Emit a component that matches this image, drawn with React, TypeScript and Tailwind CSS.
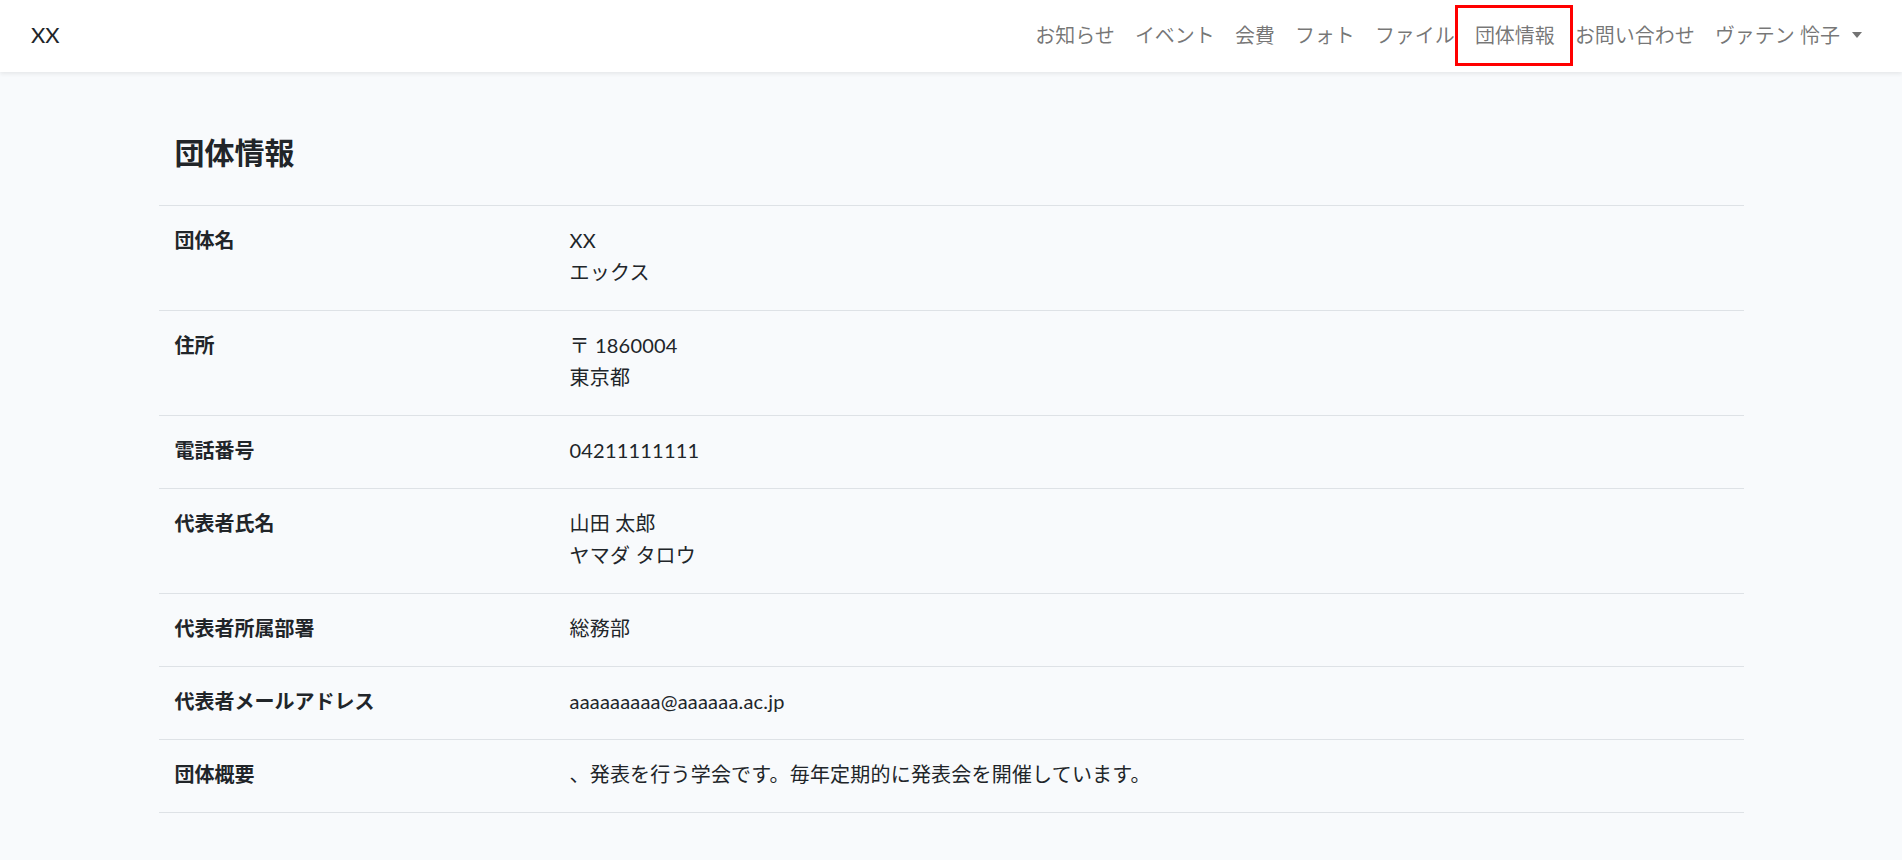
import React from "react";

type Row = { label: string; lines: string[] };

const NAV_ITEMS = ["お知らせ", "イベント", "会費", "フォト", "ファイル", "団体情報", "お問い合わせ"];

const ROWS: Row[] = [
  { label: "団体名", lines: ["XX", "エックス"] },
  { label: "住所", lines: ["〒 1860004", "東京都"] },
  { label: "電話番号", lines: ["04211111111"] },
  { label: "代表者氏名", lines: ["山田 太郎", "ヤマダ タロウ"] },
  { label: "代表者所属部署", lines: ["総務部"] },
  { label: "代表者メールアドレス", lines: ["aaaaaaaaa@aaaaaa.ac.jp"] },
  { label: "団体概要", lines: ["、発表を行う学会です。毎年定期的に発表会を開催しています。"] },
];

function Navbar() {
  return (
    <header className="relative z-10 flex h-[72px] items-center justify-between bg-white pb-[2px] pl-[31px] pr-[30px] shadow-[0_2px_4px_rgba(0,0,0,0.075)]">
      <a className="text-[22px] leading-none text-[#212529]">XX</a>
      <nav className="flex items-center text-[20px] leading-[30px] text-[rgba(0,0,0,0.55)]">
        {NAV_ITEMS.map((item) => (
          <a key={item} className="relative block px-[10px]">
            {item}
            {item === "団体情報" && (
              <span className="pointer-events-none absolute -left-[10px] -right-[8px] -top-[15px] -bottom-[16px] border-[3px] border-[#ff0000]" />
            )}
          </a>
        ))}
        <a className="flex items-center px-[10px]">
          ヴァテン 怜子
          <span className="ml-[12px] h-0 w-0 border-x-[5px] border-t-[6px] border-x-transparent border-t-[rgba(0,0,0,0.55)]" />
        </a>
      </nav>
    </header>
  );
}

export default function App() {
  return (
    <div className="min-h-screen bg-[#f8fafc] font-['Lato','Noto_Sans_CJK_JP',sans-serif] text-[#212529]">
      <Navbar />
      <main className="mx-auto w-[1585px] pt-[62px]">
        <h1 className="mb-[35px] px-4 text-[30px] font-bold leading-[36px]">団体情報</h1>
        <div className="border-t border-[#dee2e6]">
          {ROWS.map((row) => (
            <div key={row.label} className="grid grid-cols-[395px_1fr] border-b border-[#dee2e6] text-[20px] leading-8">
              <div className="px-4 pb-[22px] pt-[18px] font-bold">{row.label}</div>
              <div className="px-4 pb-[22px] pt-[18px] tracking-[0.01em]">
                {row.lines.map((line) => (
                  <div key={line}>{line}</div>
                ))}
              </div>
            </div>
          ))}
        </div>
      </main>
    </div>
  );
}
